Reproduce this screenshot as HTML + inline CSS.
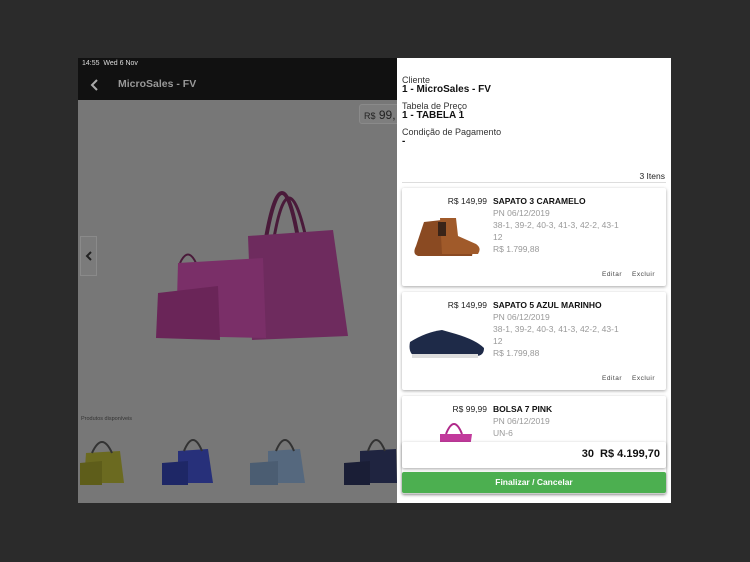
<!DOCTYPE html><html><head><meta charset="utf-8"><style>
*{margin:0;padding:0;box-sizing:border-box}
body{width:750px;height:562px;background:#2b2b2b;font-family:"Liberation Sans",sans-serif;position:relative;overflow:hidden}
.abs{position:absolute}
.left{left:78px;top:58px;width:319px;height:445px;background:#777;overflow:hidden}
.hdr{left:0;top:0;width:319px;height:42px;background:#111}
.right{left:397px;top:58px;width:274px;height:445px;background:#fff;overflow:hidden}
.lbl{font-size:9px;color:#333;left:5px}
.val{font-size:10px;font-weight:bold;color:#111;left:5px}
.card{left:5px;width:264px;height:98px;background:#fff;box-shadow:0 1px 3px rgba(0,0,0,.35);border-radius:2px}
.pr{font-size:8.5px;color:#222;text-align:right;width:85px;left:0;top:8px}
.nm{font-size:8.5px;font-weight:bold;color:#111;left:91px;top:8px}
.g{font-size:8.5px;color:#999;left:91px}
.act{font-size:6.5px;color:#444;letter-spacing:.5px;top:83px}
</style></head><body>
<div class="abs left">
 <div class="abs hdr"></div>
 <div class="abs" style="left:4px;top:2px;font-size:7px;color:#ddd">14:55 &nbsp;Wed 6 Nov</div>
 <svg class="abs" style="left:12px;top:20px" width="10" height="14"><path d="M7 2 L2 7 L7 12" stroke="#aaa" stroke-width="2" fill="none"/></svg>
 <div class="abs" style="left:40px;top:20px;font-size:10.5px;color:#999;font-weight:bold">MicroSales - FV</div>
 <div class="abs" style="left:281px;top:46px;width:50px;height:20px;background:#7e7e7e;border:1px solid #8a8a8a;border-radius:3px;font-size:12px;color:#222;padding:3px 4px"><span style="font-size:9px">R$</span> 99,</div>
 <div class="abs" style="left:2px;top:178px;width:17px;height:40px;border:1px solid #8a8a8a;background:#7b7b7b"></div>
 <svg class="abs" style="left:7px;top:192px" width="8" height="12"><path d="M6 2 L2 6 L6 10" stroke="#222" stroke-width="2" fill="none"/></svg>
 <svg class="abs" style="left:70px;top:100px" width="210" height="190">
  <path d="M118 80 Q134 -10 150 80" stroke="#4a1a3a" stroke-width="4" fill="none"/>
  <path d="M126 80 Q140 0 158 80" stroke="#4a1a3a" stroke-width="3" fill="none"/>
  <path d="M100 78 L185 72 L200 178 L104 182 Z" fill="#6e2b5e"/>
  <path d="M32 105 Q40 88 48 105" stroke="#4a1a3a" stroke-width="2" fill="none"/>
  <path d="M30 105 L115 100 L118 180 L28 178 Z" fill="#7a2f68"/>
  <path d="M10 135 L70 128 L72 182 L8 180 Z" fill="#6a2558"/>
 </svg>
 <div class="abs" style="left:3px;top:358px;font-size:5.5px;color:#333">Produtos disponíveis</div>
 <svg class="abs" style="left:0;top:375px" width="319" height="60">
  <g fill="#6b6a20"><path d="M8 20 L42 18 L46 50 L6 50Z"/><path d="M2 30 L24 28 L24 52 L2 52Z" fill="#5e5d1a"/></g>
  <path d="M14 20 Q24 -2 34 20" stroke="#333" stroke-width="2" fill="none"/>
  <g fill="#27307a"><path d="M100 18 L130 16 L135 50 L100 50Z"/><path d="M84 30 L110 28 L110 52 L84 52Z" fill="#1e2766"/></g>
  <path d="M106 18 Q115 -4 124 18" stroke="#333" stroke-width="2" fill="none"/>
  <g fill="#55687e"><path d="M190 18 L222 16 L227 50 L190 50Z"/><path d="M172 30 L200 28 L200 52 L172 52Z" fill="#4b5d72"/></g>
  <path d="M198 18 Q207 -4 216 18" stroke="#333" stroke-width="2" fill="none"/>
  <g fill="#1f2440"><path d="M282 18 L318 16 L319 50 L282 50Z"/><path d="M266 30 L292 28 L292 52 L266 52Z" fill="#1a1e36"/></g>
  <path d="M290 18 Q298 -4 307 18" stroke="#333" stroke-width="2" fill="none"/>
 </svg>
</div>
<div class="abs right">
 <div class="abs lbl" style="top:17px">Cliente</div>
 <div class="abs val" style="top:26px">1 - MicroSales - FV</div>
 <div class="abs lbl" style="top:43px">Tabela de Preço</div>
 <div class="abs val" style="top:52px">1 - TABELA 1</div>
 <div class="abs lbl" style="top:69px">Condição de Pagamento</div>
 <div class="abs val" style="top:78px">-</div>
 <div class="abs" style="right:6px;top:113px;font-size:8.5px;color:#222">3 Itens</div>
 <div class="abs" style="left:5px;top:124px;width:264px;height:1px;background:#ddd"></div>
 <div class="abs card" style="top:130px">
  <div class="abs pr">R$ 149,99</div><div class="abs nm">SAPATO 3 CARAMELO</div>
  <div class="abs g" style="top:20px">PN 06/12/2019</div><div class="abs g" style="top:32px">38-1, 39-2, 40-3, 41-3, 42-2, 43-1</div>
  <div class="abs g" style="top:44px">12</div><div class="abs g" style="top:56px">R$ 1.799,88</div>
  <svg class="abs" style="left:10px;top:28px" width="68" height="44"><path d="M12 6 L30 4 L32 22 L52 30 Q62 34 60 40 L6 40 Q0 38 4 30 Z" fill="#8a4a22"/><path d="M28 2 L44 2 L46 20 L64 28 Q70 32 66 38 L30 38 Z" fill="#a05a2a"/><rect x="26" y="6" width="8" height="14" fill="#3a2418"/></svg>
  <div class="abs act" style="left:200px">Editar</div><div class="abs act" style="left:230px">Excluir</div>
 </div>
 <div class="abs card" style="top:234px">
  <div class="abs pr">R$ 149,99</div><div class="abs nm">SAPATO 5 AZUL MARINHO</div>
  <div class="abs g" style="top:20px">PN 06/12/2019</div><div class="abs g" style="top:32px">38-1, 39-2, 40-3, 41-3, 42-2, 43-1</div>
  <div class="abs g" style="top:44px">12</div><div class="abs g" style="top:56px">R$ 1.799,88</div>
  <svg class="abs" style="left:4px;top:30px" width="80" height="40"><path d="M4 20 Q20 10 36 8 L50 12 Q70 18 78 26 Q78 34 70 34 L8 34 Q2 30 4 20Z" fill="#1e2a48"/><path d="M6 32 L72 32 L72 36 L6 36Z" fill="#ddd"/></svg>
  <div class="abs act" style="left:200px">Editar</div><div class="abs act" style="left:230px">Excluir</div>
 </div>
 <div class="abs card" style="top:338px">
  <div class="abs pr">R$ 99,99</div><div class="abs nm">BOLSA 7 PINK</div>
  <div class="abs g" style="top:20px">PN 06/12/2019</div><div class="abs g" style="top:32px">UN-6</div>
  <svg class="abs" style="left:34px;top:22px" width="40" height="30"><path d="M10 16 Q18 -4 26 16" stroke="#b02a8a" stroke-width="2" fill="none"/><path d="M4 16 L36 16 L34 30 L4 30Z" fill="#c23a9c"/></svg>
 </div>
 <div class="abs" style="left:5px;top:384px;width:264px;height:26px;background:#fff;box-shadow:0 1px 3px rgba(0,0,0,.35);border-radius:2px;text-align:right;padding:6px 6px 0 0;font-size:11px;font-weight:bold;color:#111">30 &nbsp;R$ 4.199,70</div>
 <div class="abs" style="left:5px;top:414px;width:264px;height:21px;background:#4caf50;box-shadow:0 1px 2px rgba(0,0,0,.3);border-radius:2px;text-align:center;font-size:8.5px;font-weight:bold;color:#fff;padding-top:5px">Finalizar / Cancelar</div>
</div>
</body></html>
